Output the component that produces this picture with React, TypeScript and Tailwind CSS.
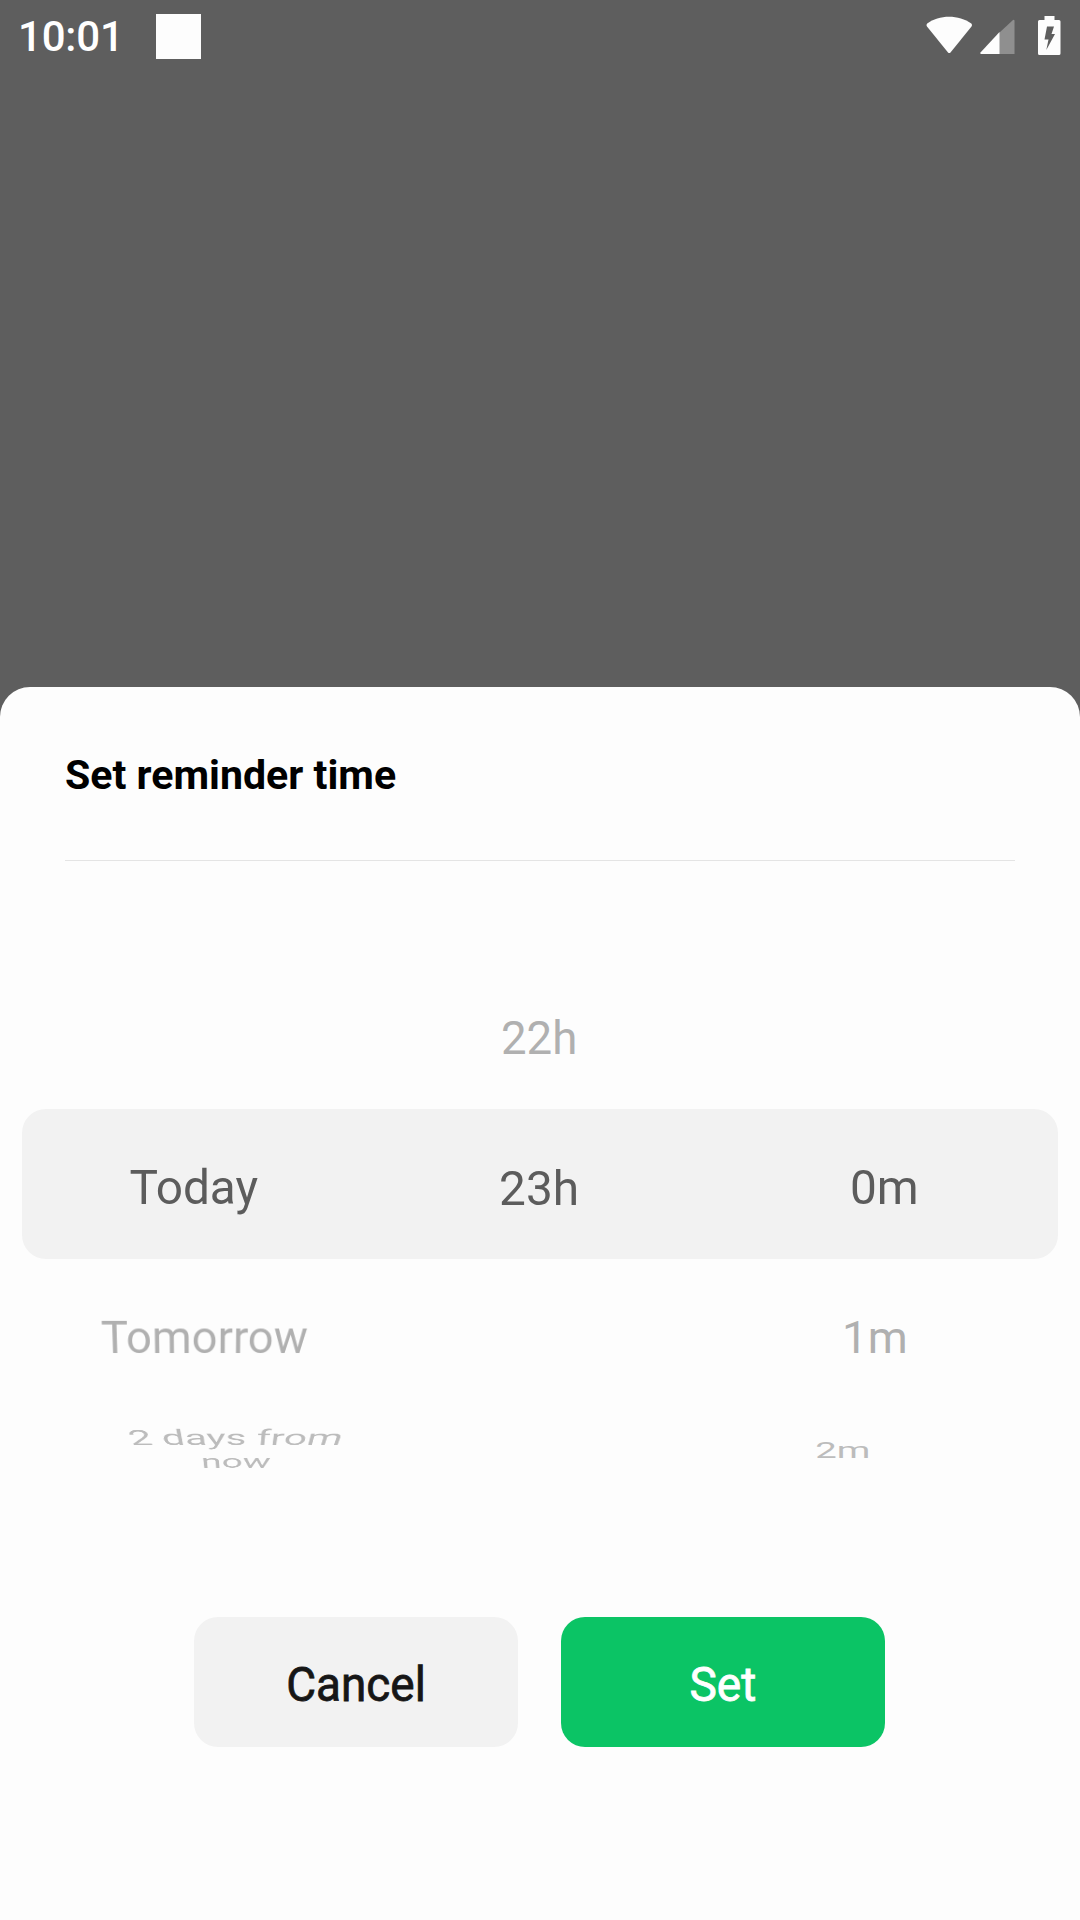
import React from "react";

function StatusBar() {
  return (
    <div className="flex h-[72px] items-start text-white">
      <span className="ml-[18px] mt-[12px] w-[107px] whitespace-nowrap text-[42px] leading-[49px] font-medium tracking-[-0.2px]">10:01</span>
      <div className="ml-[31px] mt-[14px] h-[45px] w-[45px] bg-[#fdfdfd]" />
      <svg className="mt-[16px] ml-[724px] h-[38px] w-[48px] shrink-0" viewBox="0 0 48 38">
        <path d="M2.200 7.500C14 -1.500 34 -1.500 46.300 7.500Q47.500 9 46.500 10.500L25.500 36.500Q24.300 37.500 23 36.500L2 10.500Q1 9 2.200 7.500Z" fill="#fdfdfd" />
      </svg>
      <svg className="mt-[18px] ml-[7px] h-[36px] w-[36px] shrink-0" viewBox="0 0 36 36">
        <path d="M19 15L33 2Q34.500 1 34.500 3V36H19Z" fill="#8f8f8f" />
        <path d="M0.500 34.500L19.500 14V36H1Q0 36 0.500 34.500Z" fill="#fdfdfd" />
      </svg>
      <svg className="mt-[16px] ml-[22px] h-[39px] w-[23px] shrink-0" viewBox="0 0 23 39">
        <path d="M6.500 0H16.500V4H21Q22.500 4 22.500 5.500V37.500Q22.500 39 21 39H1.500Q0 39 0 37.500V5.500Q0 4 1.500 4H6.500Z" fill="#fdfdfd" />
        <path d="M9 10.500H16L13.500 18H17L8.300 34L10.500 23.500H6.500Z" fill="#5e5e5e" />
      </svg>
    </div>
  );
}

const row = "flex h-[150px] shrink-0 items-center justify-center whitespace-nowrap";

export default function App() {
  return (
    <div className="flex h-[1920px] w-[1080px] flex-col overflow-hidden bg-[#5e5e5e] font-['Roboto',sans-serif]">
      <StatusBar />
      <div className="mt-[615px] flex flex-1 flex-col rounded-t-[30px] bg-[#fdfdfd]">
        <div className="mx-[65px] h-[174px] border-b border-[#e4e4e4] pt-[64px]">
          <h1 className="text-[41.1px] leading-[48px] font-bold text-black">Set reminder time</h1>
        </div>
        <div className="mx-[22px] mt-[98px] grid h-[600px] grid-cols-3 grid-rows-[150px_150px_150px_150px] text-[48.5px] leading-[58px] text-[#b0b0b0]">
          <div className={row} />
          <div className={row}>
            <span className="[transform:translate(-0.5px,4.5px)_scale(0.94,0.94)]">22h</span>
          </div>
          <div className={row} />

          <div className="col-span-3 grid grid-cols-3 rounded-[24px] bg-[#f2f2f2] text-[#5c5c5c]">
            <div className={row}><span className="[transform:translate(-0.5px,4px)_scaleX(0.985)]">Today</span></div>
            <div className={row}><span className="[transform:translate(-0.5px,4.5px)_scaleX(0.985)]">23h</span></div>
            <div className={row}><span className="[transform:translate(-0.5px,4px)_scaleX(0.985)]">0m</span></div>
          </div>

          <div className={row}>
            <span className="[transform:translate(10px,4px)_perspective(1200px)_rotateX(-22deg)_scale(0.935,1.02)]">Tomorrow</span>
          </div>
          <div className={row} />
          <div className={row}>
            <span className="[transform:translate(-10px,4px)_scale(0.94,0.93)]">1m</span>
          </div>

          <div className="flex h-[150px] items-start justify-center">
            <div className="whitespace-nowrap text-center text-[#bcbcbc] [transform:translate(41px,-16.5px)_perspective(540px)_rotateX(-63deg)_scale(0.8,0.9)]">2 days from<br />now</div>
          </div>
          <div className={row} />
          <div className="flex h-[150px] items-start justify-center">
            <span className="text-[#bcbcbc] [transform:translate(-42px,12.5px)_scale(0.79,0.46)]">2m</span>
          </div>
        </div>
        <div className="mt-[58px] mr-[2px] flex justify-center gap-[43px] text-[48px] leading-[56px]">
          <button className="h-[130px] w-[324px] rounded-[24px] bg-[#f2f2f2] pt-[5px] text-[#161616] [-webkit-text-stroke:0.8px_#161616]"><span className="inline-block translate-x-[1px] scale-x-[0.955]">Cancel</span></button>
          <button className="h-[130px] w-[324px] rounded-[24px] bg-[#0bc465] pt-[5px] text-white [-webkit-text-stroke:0.8px_white]"><span className="inline-block scale-x-[0.96]">Set</span></button>
        </div>
      </div>
    </div>
  );
}
